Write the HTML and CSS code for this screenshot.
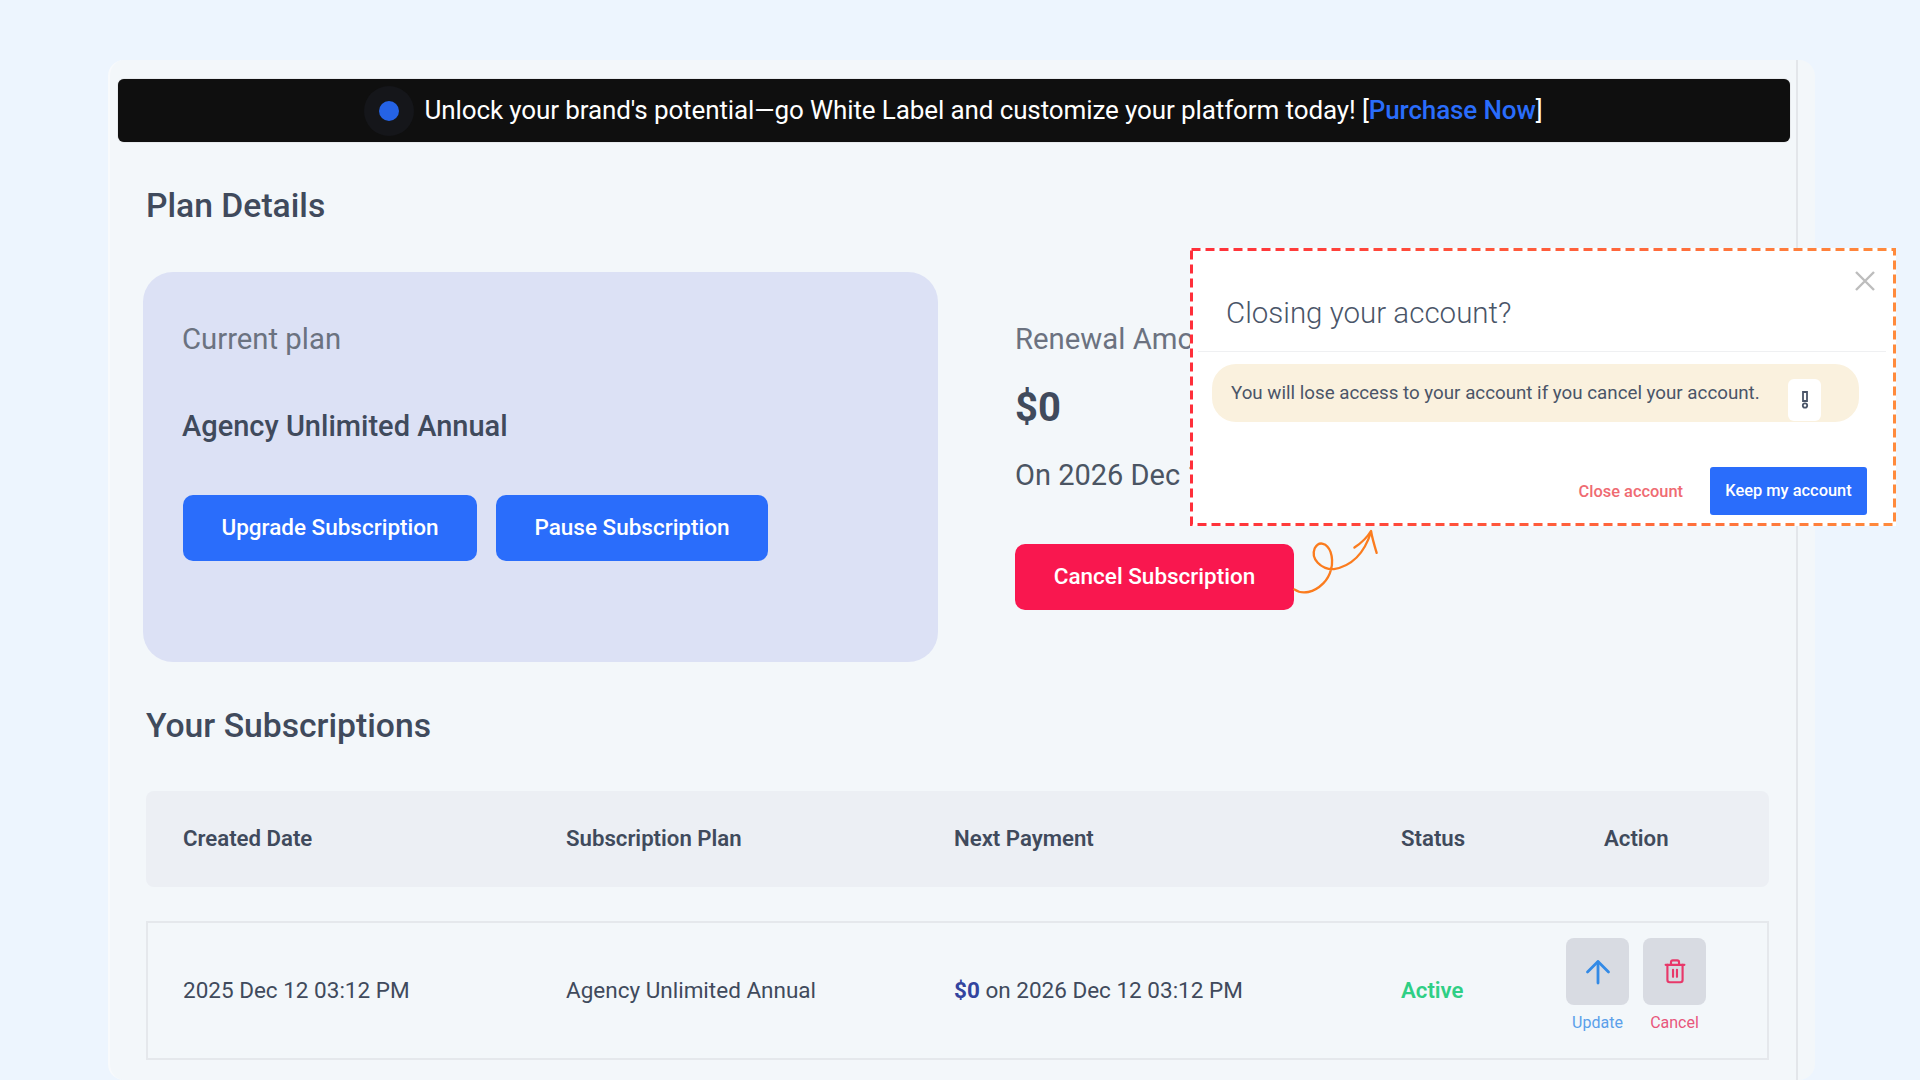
FILE: index.html
```html
<!DOCTYPE html>
<html lang="en">
<head>
<meta charset="utf-8">
<title>Plan Details</title>
<link rel="stylesheet" href="styles.css">
</head>
<body>
<main class="panel">
  <div class="content">
    <div class="banner">
      <span class="halo"><span class="dot"></span></span>
      <span class="banner-text">Unlock your brand's potential—go White Label and customize your platform today! [<a class="banner-link">Purchase Now</a>]</span>
    </div>
    <h2 class="heading">Plan Details</h2>
    <section class="plan-row">
      <div class="plan-card">
        <p class="label">Current plan</p>
        <p class="plan-name">Agency Unlimited Annual</p>
        <div class="plan-actions">
          <button class="btn btn-upgrade">Upgrade Subscription</button>
          <button class="btn btn-pause">Pause Subscription</button>
        </div>
      </div>
      <div class="renewal">
        <p class="label">Renewal Amount</p>
        <p class="amount">$0</p>
        <p class="renew-date">On 2026 Dec 12 03:12 PM</p>
        <button class="btn btn-cancel">Cancel Subscription</button>
      </div>
    </section>
    <h2 class="heading heading-subs">Your Subscriptions</h2>
    <div class="thead grid">
      <span>Created Date</span>
      <span>Subscription Plan</span>
      <span>Next Payment</span>
      <span>Status</span>
      <span>Action</span>
    </div>
    <div class="trow grid">
      <span>2025 Dec 12 03:12 PM</span>
      <span>Agency Unlimited Annual</span>
      <span><b class="price">$0</b> on 2026 Dec 12 03:12 PM</span>
      <span class="active">Active</span>
      <div class="actions">
        <div class="action action-update">
          <span class="icon-btn">
            <svg width="30" height="30" viewBox="0 0 30 30" fill="none" stroke="#338ae6" stroke-width="2.800" stroke-linecap="round" stroke-linejoin="round"><path d="M15 26V5"/><path d="M4.500 15 15 4.500 25.500 15"/></svg>
          </span>
          <span>Update</span>
        </div>
        <div class="action action-cancel">
          <span class="icon-btn">
            <svg width="22" height="25" viewBox="0 0 24 28" fill="none" stroke="#e8386a" stroke-width="2.400" stroke-linecap="round" stroke-linejoin="round"><path d="M1.500 6.500H22.500"/><path d="M7.500 6V3.500Q7.500 1.500 9.500 1.500H14.500Q16.500 1.500 16.500 3.500V6"/><path d="M3.500 6.500V23.500Q3.500 26 6 26H18Q20.500 26 20.500 23.500V6.500"/><path d="M9.800 12V20M14.200 12V20"/></svg>
          </span>
          <span>Cancel</span>
        </div>
      </div>
    </div>
  </div>
</main>

<svg class="arrow" width="87" height="73" viewBox="881 80 260 220" fill="none" stroke="#fb7c1e" stroke-width="7" stroke-linecap="round" stroke-linejoin="round">
  <path d="M881 268C905 285 940 278 968 250C990 228 1002 190 990 155C980 128 955 120 942 145C930 175 960 208 1000 207C1050 198 1090 165 1112 95"/>
  <path d="M1062 142C1080 130 1100 112 1112 92C1116 115 1122 135 1129 158"/>
</svg>

<aside class="modal">
  <svg class="modal-dash" width="706" height="278" viewBox="0 0 706 278" fill="none">
    <defs>
      <linearGradient id="dash" x1="0" y1="0" x2="1" y2="0">
        <stop offset="0" stop-color="#ff2f3a"/>
        <stop offset="1" stop-color="#ff8a3c"/>
      </linearGradient>
    </defs>
    <rect x="1.500" y="1.500" width="703" height="275" stroke="url(#dash)" stroke-width="3" stroke-dasharray="9 5"/>
  </svg>
  <span class="modal-close">
    <svg width="20" height="20" viewBox="0 0 20 20" fill="none" stroke="#bdbdbd" stroke-width="2.400"><path d="M1 1 19 19M19 1 1 19"/></svg>
  </span>
  <h3 class="modal-title">Closing your account?</h3>
  <div class="modal-body">
    <div class="alert">
      <span class="alert-text">You will lose access to your account if you cancel your account.</span>
      <span class="alert-icon">
        <svg width="8" height="18" viewBox="0 0 8 18" fill="none" stroke="#4a5568" stroke-width="1.800"><path d="M2 1H6V10H2Z"/><circle cx="4" cy="14.500" r="2.200"/></svg>
      </span>
    </div>
  </div>
  <div class="modal-foot">
    <span class="close-link">Close account</span>
    <button class="keep">Keep my account</button>
  </div>
</aside>
</body>
</html>
```

FILE: styles.css
```css
* { box-sizing: border-box; }
html, body { margin: 0; height: 100%; }
body {
  position: relative;
  overflow: hidden;
  background: #edf5fe;
  font-family: Roboto, "Liberation Sans", sans-serif;
  color: #404a5c;
}
p, h2, h3 { margin: 0; }
button { border: 0; font-family: inherit; }

.panel {
  margin: 60px 105px 0 108px;
  height: 1020px;
  background: #f3f7fa;
  border-left: 2px solid #f8fafc;
  border-radius: 16px;
  overflow: hidden;
}
.content {
  width: 1688px;
  height: 100%;
  padding: 19px 6px 0 8px;
  border-right: 2px solid #e3e6ea;
}

.banner {
  height: 63px;
  display: flex;
  align-items: center;
  justify-content: center;
  gap: 11px;
  padding-right: 2px;
  background: #0f0f0f;
  border-radius: 6px;
  box-shadow: 0 0 1px #777;
  color: #fff;
  font-size: 26px;
  letter-spacing: -0.11px;
}
.banner-text { padding-bottom: 2px; }
.halo {
  width: 50px;
  height: 50px;
  display: flex;
  align-items: center;
  justify-content: center;
  border-radius: 50%;
  background: #15161a;
}
.dot { width: 20px; height: 20px; border-radius: 50%; background: #2563e6; }
.banner-link { color: #2a6dfb; font-weight: 500; }

.heading {
  margin: 44px 0 0 28px;
  font-size: 33.7px;
  line-height: 40px;
  font-weight: 500;
}
.heading-subs { margin-top: 44px; }

.plan-row { display: flex; margin: 46px 0 0 25px; }
.plan-card {
  width: 795px;
  height: 390px;
  padding: 48px 39px;
  background: #dce1f5;
  border-radius: 30px;
}
.label { font-size: 29.3px; line-height: 39px; color: #6b7280; white-space: nowrap; }
.plan-name { margin-top: 48px; font-size: 29px; line-height: 39px; font-weight: 500; }
.plan-actions { display: flex; gap: 19px; margin: 49px 0 0 1px; }
.btn {
  height: 66px;
  padding: 0 0 2px;
  border-radius: 10px;
  color: #fff;
  font-size: 22.5px;
  font-weight: 500;
}
.btn-upgrade { width: 294px; background: #2a6dfb; }
.btn-pause { width: 272px; background: #2a6dfb; }

.renewal { margin-left: 77px; padding-top: 48px; }
.amount { margin-top: 28px; font-size: 40px; line-height: 42px; font-weight: 700; }
.renew-date { margin-top: 26px; font-size: 29px; line-height: 40px; color: #4b5563; white-space: nowrap; }
.btn-cancel { width: 279px; margin-top: 49px; background: #f9174f; }

.grid {
  display: grid;
  grid-template-columns: 383px 388px 447px 203px 1fr;
  align-items: center;
  margin: 0 21px 0 28px;
  padding: 0 0 2px 37px;
  font-size: 22.5px;
}
.thead {
  height: 96px;
  margin-top: 45px;
  background: #eceff4;
  border-radius: 8px;
  font-size: 22.2px;
  font-weight: 600;
}
.trow {
  height: 139px;
  margin-top: 34px;
  border: 2px solid #e5e8ec;
  padding-left: 35px;
}
.price { color: #33449f; font-weight: 700; }
.active { color: #2fcf85; font-size: 22.2px; font-weight: 600; }

.actions { display: flex; gap: 14px; margin: 0 0 8px -38px; }
.action {
  width: 63px;
  display: flex;
  flex-direction: column;
  align-items: center;
  gap: 8px;
  font-size: 16px;
  line-height: 20px;
}
.action-update { color: #5aa0ea; }
.action-cancel { color: #e8567c; }
.icon-btn {
  width: 63px;
  height: 67px;
  display: flex;
  align-items: center;
  justify-content: center;
  background: #d8dbe2;
  border-radius: 8px;
}

.arrow { position: absolute; left: 1294px; top: 527px; overflow: visible; }

.modal {
  position: absolute;
  left: 1190px;
  top: 248px;
  width: 706px;
  height: 278px;
  background: #fff;
  padding: 0 10px 0 8px;
}
.modal-dash { position: absolute; left: 0; top: 0; }
.modal-close { position: absolute; left: 665px; top: 23px; display: flex; }
.modal-title {
  padding: 42px 0 0 28px;
  height: 104px;
  border-bottom: 1px solid #eff0f2;
  font-size: 29.5px;
  line-height: 46px;
  font-weight: 300;
  color: #4a5568;
}
.modal-body { padding: 12px 27px 0 14px; }
.alert {
  height: 58px;
  display: flex;
  padding-left: 19px;
  background: #faf1de;
  border-radius: 24px;
}
.alert-text { width: 557px; padding-top: 15px; font-size: 18.75px; line-height: 28px; color: #4a5568; white-space: nowrap; }
.alert-icon {
  width: 33px;
  height: 42px;
  margin-top: 15px;
  display: flex;
  align-items: center;
  justify-content: center;
  background: #fff;
  border-radius: 6px;
}
.modal-foot {
  display: flex;
  justify-content: flex-end;
  align-items: center;
  gap: 27px;
  padding: 45px 19px 0 0;
}
.close-link { font-size: 16.4px; font-weight: 500; color: #ef6b72; }
.keep {
  width: 157px;
  height: 48px;
  padding: 0 0 2px;
  background: #2a6dfb;
  border-radius: 3px;
  color: #fff;
  font-size: 16.4px;
  font-weight: 500;
}
```
